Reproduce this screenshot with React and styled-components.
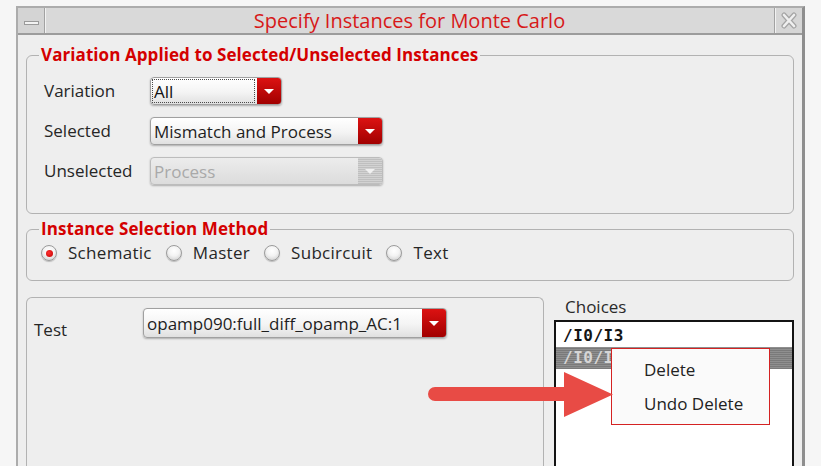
import React from 'react';
import styled, { createGlobalStyle } from 'styled-components';

const GlobalStyle = createGlobalStyle`
  html, body { margin: 0; padding: 0; background: #f6f6f6; overflow: hidden; }
  body { font-family: "Open Sans", "DejaVu Sans", sans-serif; color: #242424; }
`;

const Page = styled.div`
  width: 821px;
  height: 466px;
  box-sizing: border-box;
  padding: 6px 0 0 16px;
  overflow: hidden;
`;

const Window = styled.div`
  width: 789px;
  height: 472px;
  box-sizing: border-box;
  border-top: 2px solid #acacac;
  border-left: 2px solid #acacac;
  border-right: 3px solid #8e8e8e;
  background: #eeeeee;
  display: flex;
  flex-direction: column;
`;

const TitleBar = styled.div`
  display: flex;
  height: 27px;
  box-sizing: border-box;
  border-bottom: 2px solid #9c9c9c;
  background: #d9d9d9;
`;

const MenuButton = styled.div`
  width: 26px;
  border-right: 1px solid #a2a2a2;
  box-shadow: 1px 0 0 #f2f2f2;
  background: #d4d4d4;
  display: flex;
  align-items: center;
  justify-content: center;
`;

const MenuBarGlyph = styled.span`
  width: 15px;
  height: 4px;
  margin-top: 4px;
  box-sizing: border-box;
  border: 1px solid #9a9a9a;
  background: #f3f3f3;
`;

const Title = styled.div`
  flex: 1;
  text-align: center;
  font-size: 20px;
  line-height: 25px;
  color: #d71818;
`;

const CloseButton = styled.div`
  width: 27px;
  border-left: 1px solid #a2a2a2;
  box-shadow: inset 1px 0 0 #f2f2f2;
  background: #d6d6d6;
  display: flex;
  align-items: center;
  justify-content: center;
`;

const Content = styled.div`
  flex: 1;
  display: flex;
  flex-direction: column;
  padding: 10px 8px 0 8px;
`;

const Group = styled.fieldset`
  margin: ${p => p.$mt || 0}px 0 0 0;
  padding: 0;
  min-width: 0;
  border: 1px solid #b2b2b2;
  border-radius: 6px;
`;

const Legend = styled.legend`
  margin-left: 12px;
  padding: 0 2px;
  color: #d40000;
  font-weight: 700;
  font-size: 17px;
  line-height: 20px;
  letter-spacing: 0.08px;
`;

const FormRows = styled.div`
  display: flex;
  flex-direction: column;
  gap: 12px;
  padding: 12px 0 28px 17px;
`;

const FormRow = styled.div`
  display: flex;
  align-items: ${p => (p.$top ? 'flex-start' : 'center')};
`;

const Label = styled.div`
  width: ${p => p.$w}px;
  font-size: 17px;
  line-height: 20px;
  margin-top: ${p => p.$mt || 0}px;
  color: #262626;
`;

const ComboBox = styled.div`
  display: flex;
  width: ${p => p.$w}px;
  height: ${p => p.$h || 28}px;
  box-sizing: border-box;
  border: 1px solid ${p => (p.$disabled ? '#bcbcbc' : '#a0a0a0')};
  border-radius: 4px;
  background: ${p =>
    p.$disabled
      ? 'linear-gradient(#ececec, #dcdcdc)'
      : 'linear-gradient(#ffffff 0%, #f4f4f4 55%, #e0e0e0 100%)'};
  box-shadow: 0 1px 2px rgba(0, 0, 0, 0.28);
  overflow: hidden;
`;

const ComboText = styled.div`
  flex: 1;
  display: flex;
  align-items: center;
  padding-left: 3px;
  font-size: 17px;
  color: ${p => (p.$disabled ? '#a9a9a9' : '#1e1e1e')};
  white-space: nowrap;
  overflow: hidden;
`;

const FocusRing = styled.div`
  flex: 1;
  display: flex;
  align-items: center;
  margin: 1px 2px 1px 1px;
  padding-left: 1px;
  border: 1px dotted #4a4a4a;
  font-size: 17px;
  color: #111;
`;

const ComboArrow = styled.div`
  width: 24px;
  flex: 0 0 24px;
  display: flex;
  align-items: center;
  justify-content: center;
  background: ${p =>
    p.$disabled
      ? 'repeating-linear-gradient(#d2d2d2 0 1px, #bfbfbf 1px 2px)'
      : 'linear-gradient(#dc1212, #a10000)'};
  &::after {
    content: '';
    border-left: 5px solid transparent;
    border-right: 5px solid transparent;
    border-top: 5px solid ${p => (p.$disabled ? '#f0f0f0' : '#ffffff')};
    margin-top: 1px;
  }
`;

const RadioRow = styled.div`
  display: flex;
  align-items: center;
  gap: 14px;
  padding: 4px 0 17px 14px;
  height: 20px;
`;

const RadioItem = styled.label`
  display: flex;
  align-items: center;
  gap: 11px;
  font-size: 17px;
  line-height: 20px;
  letter-spacing: 0.3px;
  color: #262626;
`;

const RadioCircle = styled.span`
  width: 16px;
  height: 16px;
  border-radius: 50%;
  box-sizing: border-box;
  border: 1px solid #9b9b9b;
  background: radial-gradient(circle at 50% 35%, #ffffff 0%, #f3f3f3 45%, #c6c6c6 100%);
  box-shadow: 0 1px 1px rgba(0, 0, 0, 0.22);
  display: flex;
  align-items: center;
  justify-content: center;
  &::after {
    content: '';
    width: 7px;
    height: 7px;
    border-radius: 50%;
    background: ${p =>
      p.$checked ? 'radial-gradient(circle at 40% 40%, #ff3030, #c00000)' : 'transparent'};
  }
`;

const Bottom = styled.div`
  position: relative;
  flex: 1;
  display: flex;
  gap: 10px;
  margin-top: 16px;
`;

const TestBox = styled.div`
  width: 518px;
  box-sizing: border-box;
  border: 1px solid #b2b2b2;
  border-bottom: none;
  border-radius: 6px 6px 0 0;
  padding: 10px 0 0 7px;
`;

const ChoicesColumn = styled.div`
  width: 240px;
  display: flex;
  flex-direction: column;
`;

const ChoicesLabel = styled.div`
  padding-left: 11px;
  font-size: 17px;
  line-height: 20px;
  margin-bottom: 3px;
  color: #2a2a2a;
`;

const ListBox = styled.div`
  position: relative;
  flex: 1;
  border: 2px solid #141414;
  border-bottom: none;
  background: #ffffff;
`;

const ListItem = styled.div`
  height: ${p => p.$h}px;
  line-height: ${p => p.$h}px;
  padding: ${p => p.$pt || 0}px 0 0 7px;
  font-family: "DejaVu Sans Mono", monospace;
  font-weight: 700;
  font-size: 16px;
  letter-spacing: 0.5px;
  color: ${p => (p.$selected ? '#d6d6d6' : '#141414')};
  background: ${p =>
    p.$selected ? 'repeating-linear-gradient(#8f8f8f 0 1px, #7a7a7a 1px 2px)' : 'transparent'};
`;

const ContextMenu = styled.div`
  position: absolute;
  left: 55px;
  top: 26px;
  width: 159px;
  height: 77px;
  box-sizing: border-box;
  border: 1px solid #d42222;
  background: #fafafa;
  padding: 4px 0;
`;

const MenuItem = styled.div`
  height: 34px;
  line-height: 34px;
  padding-left: 32px;
  font-size: 17px;
  color: #222;
`;

const ArrowOverlay = styled.svg`
  position: absolute;
  left: 402px;
  top: 75px;
  pointer-events: none;
`;

function Combo({ w, h, value, disabled, focused }) {
  return (
    <ComboBox $w={w} $h={h} $disabled={disabled}>
      {focused ? (
        <FocusRing>{value}</FocusRing>
      ) : (
        <ComboText $disabled={disabled}>{value}</ComboText>
      )}
      <ComboArrow $disabled={disabled} />
    </ComboBox>
  );
}

function Radio({ label, checked }) {
  return (
    <RadioItem>
      <RadioCircle $checked={checked} />
      {label}
    </RadioItem>
  );
}

export default function App() {
  return (
    <>
      <GlobalStyle />
      <Page>
        <Window>
          <TitleBar>
            <MenuButton>
              <MenuBarGlyph />
            </MenuButton>
            <Title>Specify Instances for Monte Carlo</Title>
            <CloseButton>
              <svg width="16" height="17" viewBox="0 0 16 17">
                <path d="M3 3 L13 14 M13 3 L3 14" stroke="#a4a4a4" strokeWidth="5" strokeLinecap="round" fill="none" />
                <path d="M3 3 L13 14 M13 3 L3 14" stroke="#efefef" strokeWidth="2.6" strokeLinecap="round" fill="none" />
              </svg>
            </CloseButton>
          </TitleBar>
          <Content>
            <Group>
              <Legend>Variation Applied to Selected/Unselected Instances</Legend>
              <FormRows>
                <FormRow>
                  <Label $w={106}>Variation</Label>
                  <Combo w={132} value="All" focused />
                </FormRow>
                <FormRow>
                  <Label $w={106}>Selected</Label>
                  <Combo w={233} value="Mismatch and Process" />
                </FormRow>
                <FormRow>
                  <Label $w={106}>Unselected</Label>
                  <Combo w={233} value="Process" disabled />
                </FormRow>
              </FormRows>
            </Group>
            <Group $mt={5}>
              <Legend>Instance Selection Method</Legend>
              <RadioRow>
                <Radio label="Schematic" checked />
                <Radio label="Master" />
                <Radio label="Subcircuit" />
                <Radio label="Text" />
              </RadioRow>
            </Group>
            <Bottom>
              <TestBox>
                <FormRow $top>
                  <Label $w={109} $mt={12}>Test</Label>
                  <Combo w={304} h={30} value="opamp090:full_diff_opamp_AC:1" />
                </FormRow>
              </TestBox>
              <ChoicesColumn>
                <ChoicesLabel>Choices</ChoicesLabel>
                <ListBox>
                  <ListItem $h={22} $pt={3}>/I0/I3</ListItem>
                  <ListItem $h={22} $selected>/I0/I1</ListItem>
                  <ContextMenu>
                    <MenuItem>Delete</MenuItem>
                    <MenuItem>Undo Delete</MenuItem>
                  </ContextMenu>
                </ListBox>
              </ChoicesColumn>
              <ArrowOverlay width="186" height="46" viewBox="0 0 186 46">
                <path d="M7 15 H136 V0 L185 22.5 L136 45 V29 H7 A7 7 0 0 1 7 15 Z" fill="#e84b45" />
              </ArrowOverlay>
            </Bottom>
          </Content>
        </Window>
      </Page>
    </>
  );
}
